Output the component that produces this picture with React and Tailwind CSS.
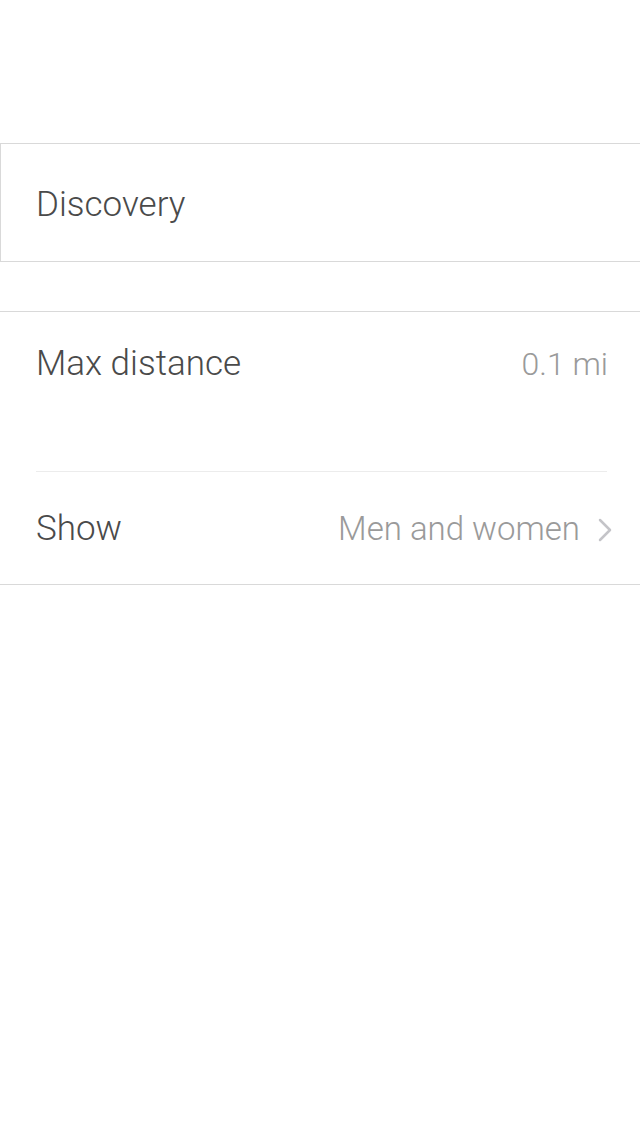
import React from "react";

const font = { fontFamily: '"Roboto", "Liberation Sans", sans-serif' };

export default function App() {
  return (
    <div className="min-h-[1136px] w-[640px] bg-white font-light text-[#4a4a4a]" style={font}>
      <div className="h-[143px]" />

      {/* section header */}
      <div className="flex h-[119px] items-center border border-r-0 border-[#d9d9d9] pl-[35px] pt-[3px]">
        <span className="text-[35px] leading-none">Discovery</span>
      </div>

      <div className="h-[49px]" />

      {/* settings group */}
      <div className="border-y border-[#d9d9d9]">
        <div className="flex h-[159px] items-start justify-between pl-[36px] pr-[32px] pt-[34px]">
          <span className="text-[35px] leading-none">Max distance</span>
          <span className="text-[32px] leading-none mt-[2px] text-[#9a9a9a]">0.1 mi</span>
        </div>
        <div className="ml-[36px] mr-[33px] h-px bg-[#ececec]" />
        <div className="flex h-[112px] items-center justify-between pl-[36px] pr-[28px]">
          <span className="text-[35px] leading-none">Show</span>
          <div className="flex items-center gap-[18px]">
            <span className="text-[33px] leading-none text-[#9a9a9a]">Men and women</span>
            <svg width="14" height="24" viewBox="0 0 14 24" fill="none" className="mt-[4px]">
              <path d="M2 2 L12 12 L2 22" stroke="#c4c4c8" strokeWidth="2.5" strokeLinecap="round" strokeLinejoin="round" />
            </svg>
          </div>
        </div>
      </div>
    </div>
  );
}
